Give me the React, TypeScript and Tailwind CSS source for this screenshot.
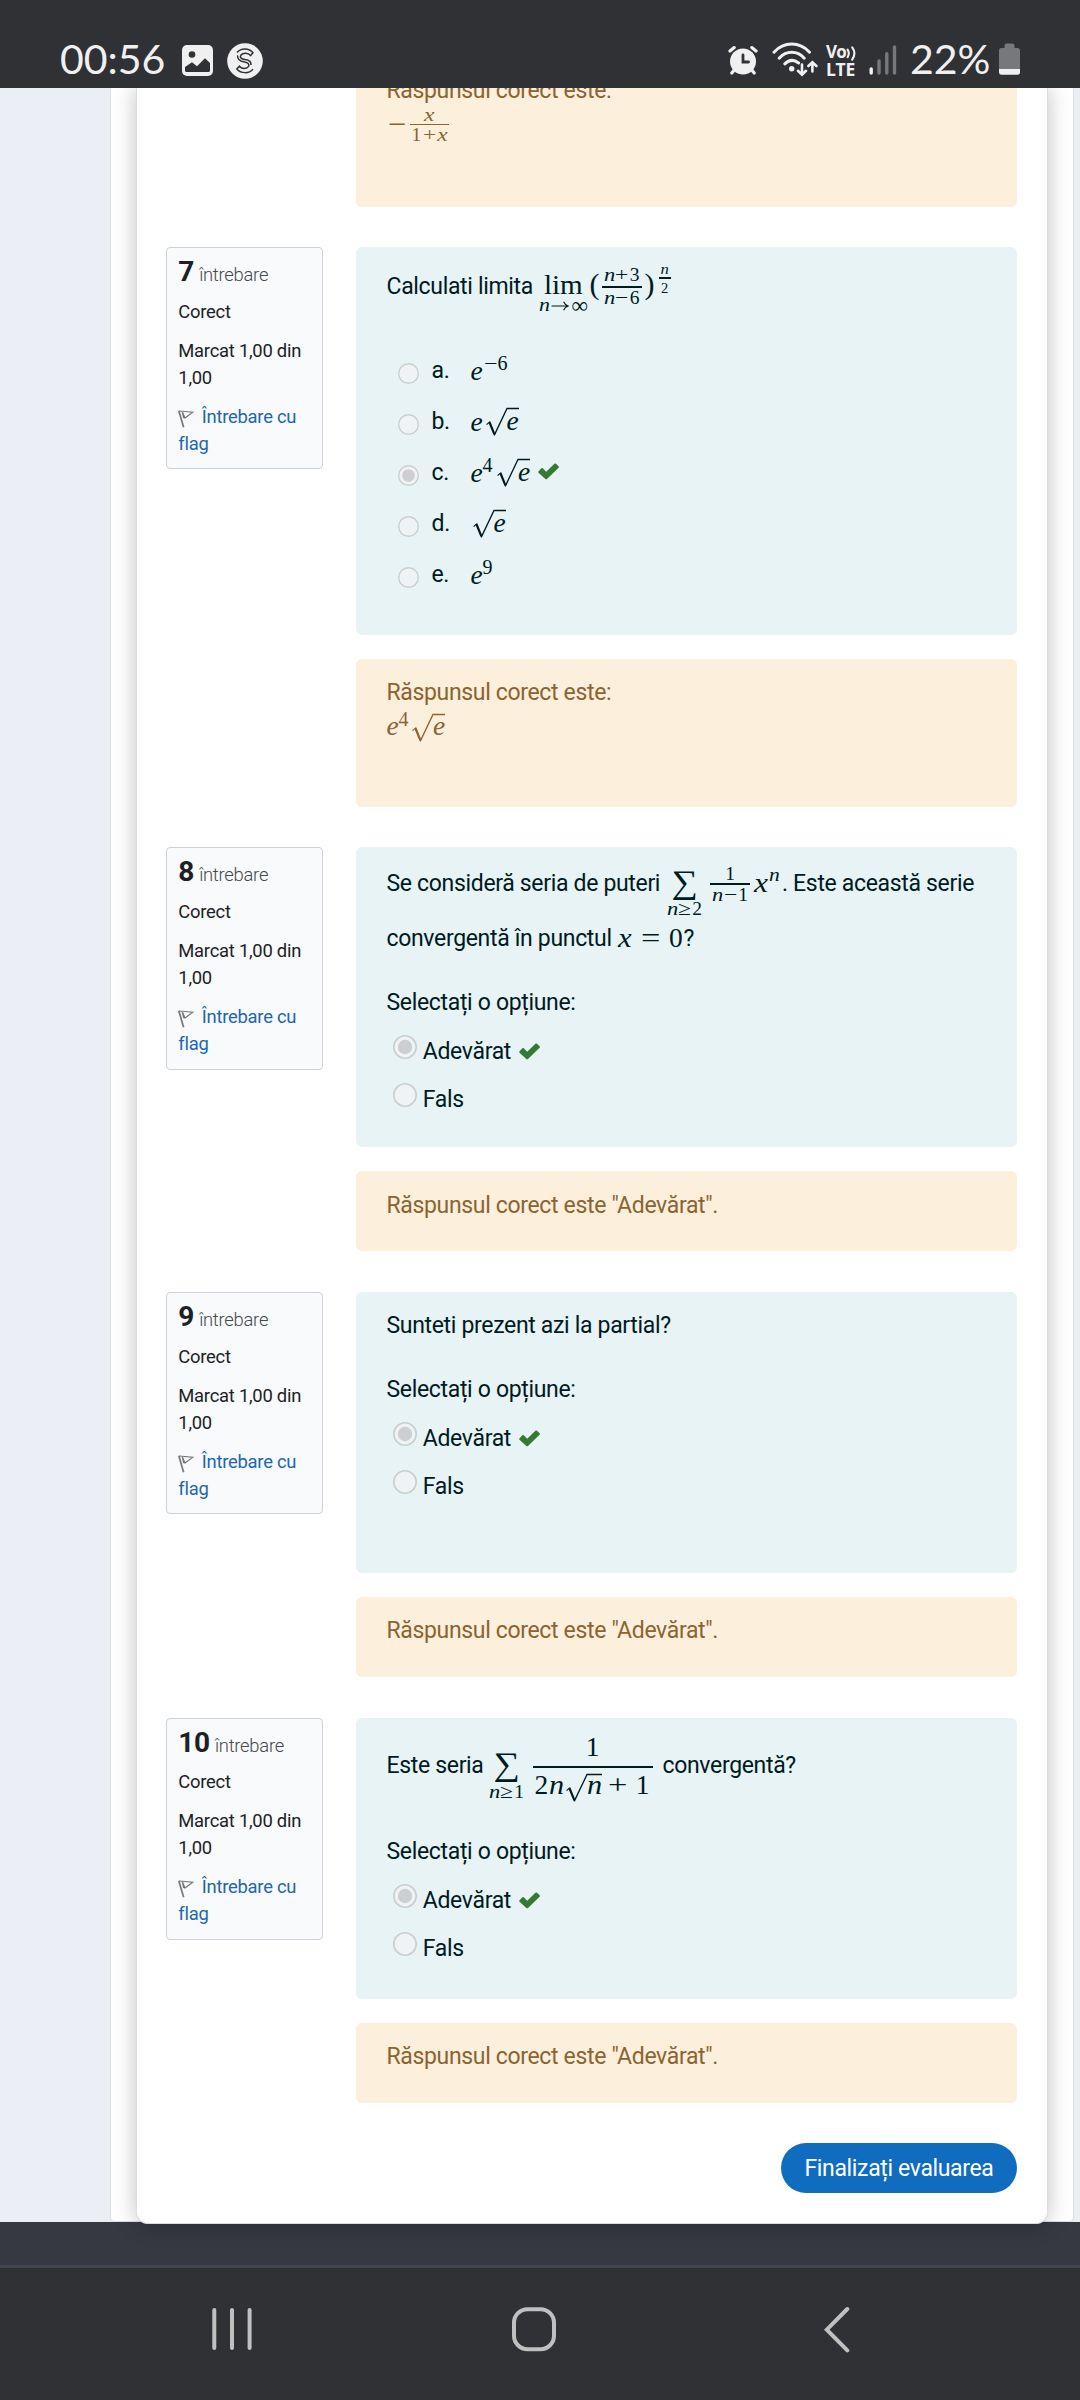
import type { ReactNode } from "react";

/* ---------- formula building blocks ---------- */

const Num = ({ c = "", children }: { c?: string; children: ReactNode }) => (
  <span className={"block shrink-0 whitespace-pre font-['Liberation_Serif',serif] leading-none " + c}>{children}</span>
);

const It = ({ c = "", children }: { c?: string; children: ReactNode }) => (
  <span className={"block shrink-0 whitespace-pre font-['Liberation_Serif',serif] italic leading-none " + c}>{children}</span>
);

const Txt = ({ c = "", children }: { c?: string; children: ReactNode }) => (
  <span className={"block shrink-0 whitespace-pre text-[23px] leading-none tracking-[-0.33px] " + c}>{children}</span>
);

function Root({ c = "", bar = 12, children }: { c?: string; bar?: number; children: ReactNode }) {
  return (
    <span className={"flex shrink-0 items-start " + c}>
      <svg className="block shrink-0" width={21 + bar} height="30" viewBox={`0 0 ${21 + bar} 30`} fill="none" stroke="currentColor">
        <path d="M0.6 17.6L4 14.6" strokeWidth="1.1" />
        <path d="M3.4 15L8.4 27.4" strokeWidth="2.2" />
        <path d={`M8.2 28.4L21 1.5H${21 + bar}`} strokeWidth="1.3" strokeLinejoin="miter" />
      </svg>
      {children}
    </span>
  );
}

const Check = ({ c = "" }: { c?: string }) => (
  <svg className={"block shrink-0 " + c} width="21" height="17" viewBox="0 0 21 17" fill="#357a32">
    <path d="M0.4 8.6L3.3 5.3Q4 4.7 4.8 5.3L8.2 8.8L16.4 0.8Q17.2 0.1 18 0.8L20.6 3.3Q21.2 4 20.6 4.8L9 15.9Q8.2 16.6 7.4 15.9L0.5 9.8Q0 9.2 0.4 8.6Z" />
  </svg>
);

const Radio = ({ c = "", on = false, size = 24 }: { c?: string; on?: boolean; size?: number }) => (
  <svg className={"block shrink-0 " + c} width={size} height={size} viewBox="0 0 24 24">
    <circle cx="12" cy="12" r="11.2" fill="#eff3f5" stroke="#cacece" strokeWidth="1.6" />
    {on && <circle cx="12" cy="12" r="7.2" fill="#cdced0" />}
  </svg>
);

/* ---------- question pieces ---------- */

function Info({ n }: { n: number }) {
  return (
    <aside className="h-[222.5px] w-[157.5px] shrink-0 rounded-[4px] border-[1.5px] border-[#cdd2d9] bg-[#f8fafc] pl-[11.5px] pt-[10px] text-[18.4px] leading-[27px] tracking-[-0.25px] text-[#1d2125]">
      <div className="flex h-[28px] items-baseline whitespace-nowrap leading-[28px]">
        <span className="text-[28px] font-bold">{n}</span>
        <span className="ml-[5px] text-[18.4px] font-light text-[#44484c]">întrebare</span>
      </div>
      <div className="mt-[11.9px]">Corect</div>
      <div className="mt-[12px] whitespace-nowrap">
        Marcat 1,00 din
        <br />
        1,00
      </div>
      <div className="mt-[12px] whitespace-nowrap text-[#1c67b0]">
        <div className="flex">
          <svg className="mr-[7.5px] mt-[7px]" width="16" height="18" viewBox="0 0 16 18" fill="none" stroke="#777" strokeWidth="1.2">
            <path d="M0.8 0.8L5.6 17.2" strokeWidth="1.7" />
            <path d="M1 1L14.8 2.2L7 8L4.3 1.8L5.7 8.2" />
          </svg>
          Întrebare cu
        </div>
        flag
      </div>
    </aside>
  );
}

function Question({ n, box, feedback, children, answer }: { n: number; box: string; feedback: string; children: ReactNode; answer: ReactNode }) {
  return (
    <section className="mb-[40.4px] flex justify-between">
      <Info n={n} />
      <div className="w-[661px]">
        <div className={"overflow-hidden rounded-[6px] bg-[#e7f3f5] pl-[30.5px] text-[#001a1e] " + box}>{children}</div>
        <div className={"mt-[24.2px] overflow-hidden rounded-[6px] bg-[#fcefdc] pl-[30.5px] text-[#8b6430] " + feedback}>{answer}</div>
      </div>
    </section>
  );
}

const Fb = ({ children }: { children: ReactNode }) => <div className="whitespace-nowrap text-[23px] leading-[34.5px] tracking-[-0.34px]">{children}</div>;

function TrueFalse() {
  return (
    <div>
      <Txt>Selectați o opțiune:</Txt>
      <div className="ml-[6px] mt-[21px] flex">
        <Radio on />
        <Txt c="ml-[6.3px] mt-[5px]">Adevărat</Txt>
        <Check c="ml-[7.5px] mt-[8px]" />
      </div>
      <div className="ml-[6px] mt-[20px] flex">
        <Radio />
        <Txt c="ml-[6.3px] mt-[5px]">Fals</Txt>
      </div>
    </div>
  );
}

function Option({ letter, on, children }: { letter: string; on?: boolean; children: ReactNode }) {
  return (
    <div className="flex h-[51.1px] items-start">
      <Radio size={21} on={on} c="mt-[17px]" />
      <Txt c="ml-[12.5px] mt-[13.3px] w-[39px]">{letter}</Txt>
      <div className="flex items-start pt-[1.6px]">{children}</div>
    </div>
  );
}

/* ---------- system bars ---------- */

function StatusBar() {
  return (
    <header className="flex h-[88px] items-start overflow-hidden bg-[#303135] text-[#f0f0f0]">
      <span className="ml-[60px] mt-[38px] block w-[122px] whitespace-nowrap font-['Lato',sans-serif] text-[41px] leading-none">00:56</span>
      <svg className="mt-[45px]" width="31" height="31" viewBox="0 0 31 31">
        <rect width="31" height="31" rx="5" fill="#f0f0f0" />
        <circle cx="10" cy="9.5" r="3.3" fill="#303135" />
        <path d="M3 22L10 17.2L15 21.2L23 13.2L28 18V25.5Q28 27 26.5 27H4.5Q3 27 3 25.5Z" fill="#303135" />
      </svg>
      <svg className="ml-[14px] mt-[43px]" width="36" height="36" viewBox="0 0 36 36" fill="none" stroke="#303135">
        <circle cx="18" cy="18" r="17.8" fill="#f0f0f0" stroke="none" />
        <path d="M10 9.6C14 4.8 22 4.8 26 9.8L23.6 12.6C21.4 9.6 16 9.4 13.8 12.2C12.4 14.8 14.6 16 18 16.6C22 17.2 24.4 19 24 22" strokeWidth="1.5" />
        <path d="M10.6 12.4C10.2 17 13.4 18.4 17.4 19C21 19.6 22.6 21 21.6 23.4C19.8 26.2 15 26.2 12.4 23.2L9.8 26C14 30.8 22 30.8 26 26.2" strokeWidth="1.5" />
      </svg>
      <svg className="ml-[465px] mt-[45px]" width="30" height="31" viewBox="0 0 30 31" fill="none" stroke="#f0f0f0" strokeWidth="3.2" strokeLinecap="round">
        <circle cx="15" cy="16.5" r="13" fill="#f0f0f0" stroke="none" />
        <path d="M2 6L6.2 2.6M28 6L23.8 2.6M5.8 25.5L3.8 28M24.2 25.5L26.2 28" />
        <path d="M15 10V17H20.5" stroke="#303135" strokeWidth="2.8" />
      </svg>
      <svg className="ml-[13.5px] mt-[42px]" width="46" height="35" viewBox="0 0 46 35" fill="none" stroke="#f0f0f0" strokeWidth="3" strokeLinecap="round">
        <path d="M2 10.2C12 -0.6 27.5 -0.6 37.5 10.2M7.2 16.2C14.5 8.4 25 8.4 32.2 16.2M12.8 21.8C17.4 17.4 22 17.4 26.6 21" />
        <circle cx="19.7" cy="26.8" r="2.7" fill="#f0f0f0" stroke="none" />
        <path d="M30 22.5V32M26 28.8L30 32.6L34 28.8M40.4 29.5V20.6M36.4 24L40.4 20.2L44.4 24" strokeWidth="2.6" />
      </svg>
      <div className="ml-[8.5px] mt-[44px] w-[32px] font-['Open_Sans',sans-serif]">
        <div className="flex h-[17px] items-start">
          <span className="block text-[17px] font-bold leading-[16px] tracking-[-0.8px]">Vo</span>
          <svg className="ml-[0.5px] mt-[1.5px]" width="11" height="15" viewBox="0 0 11 15" fill="none" stroke="#f0f0f0" strokeWidth="2.1" strokeLinecap="round">
            <path d="M1.6 3.6Q4 7.2 1.6 11.2M6.2 1.4Q10.6 7.2 6.2 13.6" />
          </svg>
        </div>
        <span className="block text-[17.5px] font-bold leading-[17px] tracking-[-0.3px]">LTE</span>
      </div>
      <svg className="ml-[11px] mt-[45px]" width="28" height="31" viewBox="0 0 28 31" strokeLinecap="round" strokeWidth="3.4">
        <path d="M2.2 24V28" stroke="#f0f0f0" />
        <path d="M10 16V28M17.8 8.6V28M25.5 2V28" stroke="#77787b" />
      </svg>
      <span className="ml-[13px] mt-[38px] block w-[87.5px] whitespace-nowrap font-['Lato',sans-serif] text-[41px] leading-none">22%</span>
      <svg className="ml-[1px] mt-[43px]" width="22" height="32" viewBox="0 0 22 32">
        <path d="M5.5 5V2.5Q5.5 0.5 7.5 0.5H13.5Q15.5 0.5 15.5 2.5V5H18.5Q21 5 21 7.5V26H0V7.5Q0 5 2.5 5Z" fill="#77787b" />
        <path d="M0 26H21V29Q21 31.8 18.5 31.8H2.5Q0 31.8 0 29Z" fill="#f0f0f0" />
      </svg>
    </header>
  );
}

function NavBar() {
  return (
    <nav className="flex h-[132px] items-start bg-[#303134]">
      <svg className="ml-[211px] mt-[38px]" width="42" height="46" viewBox="0 0 42 46" stroke="#c0c0c0" strokeWidth="4" strokeLinecap="round">
        <path d="M3.3 4V42M21 4V42M38.6 4V42" />
      </svg>
      <svg className="ml-[258px] mt-[38px]" width="46" height="48" viewBox="0 0 46 48" fill="none" stroke="#c0c0c0" strokeWidth="4">
        <rect x="3" y="3.2" width="40" height="40" rx="13.5" />
      </svg>
      <svg className="ml-[267px] mt-[38px]" width="28" height="48" viewBox="0 0 28 48" fill="none" stroke="#c0c0c0" strokeWidth="4" strokeLinecap="round">
        <path d="M23.3 3L2.8 23.7L23.3 44.4" />
      </svg>
    </nav>
  );
}

export default function App() {
  return (
    <div className="h-[2400px] w-[1080px] overflow-hidden bg-[#ebeff5] font-['Roboto',sans-serif]">
      <StatusBar />
      <main className="h-[2180px] overflow-hidden">
        <div className="ml-[109.5px] h-[2133.5px] w-[964px] rounded-b-[5px] border-x border-b border-[#dbdfe2] bg-white pl-[25px]">
          <div className="relative z-10 h-[2136px] w-[912px] rounded-b-[12px] border-x border-b border-[#d9dbdc] bg-white pl-[29.3px] pr-[29.5px] shadow-[0_0_22px_rgba(0,0,0,0.25)]">
            <div className="mb-[40.4px] flex justify-end">
              <div className="h-[118.6px] w-[661px] overflow-hidden rounded-b-[6px] bg-[#fcefdc] pl-[30.5px] text-[#8b6430]">
                <div className="-mt-[14px]">
                  <Fb>Răspunsul corect este:</Fb>
                </div>
                <div className="flex items-start">
                  <Num c="ml-[1px] mt-[2.5px] w-[22px] origin-left scale-x-[1.2] text-[27px]">−</Num>
                  <div className="w-[39.5px]">
                    <It c="ml-[14px] -mt-[4px] origin-left scale-x-[1.2] text-[19.5px]">x</It>
                    <div className="mt-[-0.4px] h-[1.7px] bg-current" />
                    <div className="mx-[2px] flex justify-between text-[19.5px]">
                      <Num>1</Num>
                      <Num c="scale-x-[1.2]">+</Num>
                      <It c="scale-x-[1.2]">x</It>
                    </div>
                  </div>
                </div>
              </div>
            </div>

            <Question
              n={7}
              box="h-[388px] pt-[16px]"
              feedback="h-[147.7px] pt-[16.8px]"
              answer={
                <>
                  <Fb>Răspunsul corect este:</Fb>
                  <div className="flex">
                    <It c="mt-[1.7px] w-[12px] text-[27.5px]">e</It>
                    <Num c="mt-[-1.8px] w-[13.5px] text-[20px]">4</Num>
                    <Root c="mt-[2.2px]">
                      <It c="-ml-[12px] mt-[-0.5px] text-[27.5px]">e</It>
                    </Root>
                  </div>
                </>
              }
            >
              <div className="flex h-[85px] items-start">
                <Txt c="mt-[12px] w-[152.5px]">Calculati limita</Txt>
                <div className="flex w-[49px] flex-col items-center">
                  <Num c="mt-[8.4px] scale-x-[1.06] text-[27.5px]">lim</Num>
                  <div className="-mt-[4px] flex w-[49px] items-start justify-between text-[19px]">
                    <It c="origin-left scale-x-[1.15]">n</It>
                    <svg className="mt-[6.5px]" width="18" height="10" viewBox="0 0 18 10" fill="none" stroke="currentColor" strokeWidth="1.1">
                      <path d="M0.5 5H17M12.6 0.8Q13.8 3.8 17.2 5Q13.8 6.2 12.6 9.2" />
                    </svg>
                    <Num c="-mt-[1px] text-[23px]">∞</Num>
                  </div>
                </div>
                <Num c="ml-[1.5px] mt-[6.5px] w-[12px] text-[30px]">(</Num>
                <div className="w-[40px]">
                  <div className="mx-[2px] mt-[2px] flex justify-between text-[19.5px]">
                    <It c="origin-left scale-x-[1.15]">n</It>
                    <Num c="scale-x-[1.2]">+</Num>
                    <Num>3</Num>
                  </div>
                  <div className="mt-[1.8px] h-[1.7px] bg-current" />
                  <div className="mx-[2px] flex justify-between text-[19.5px]">
                    <It c="origin-left scale-x-[1.15]">n</It>
                    <Num c="scale-x-[1.2]">−</Num>
                    <Num>6</Num>
                  </div>
                </div>
                <Num c="ml-[3px] mt-[6.5px] w-[14px] text-[30px]">)</Num>
                <div className="flex w-[12px] flex-col items-center text-[14.5px]">
                  <It c="-mt-[1.2px] scale-x-[1.15]">n</It>
                  <div className="mt-[1px] h-[1.6px] w-full bg-current" />
                  <Num c="mt-[2px]">2</Num>
                </div>
              </div>
              <div className="ml-[11.5px] -mt-[2.3px]">
                <Option letter="a.">
                  <It c="mt-[9.5px] w-[13px] text-[27.5px]">e</It>
                  <Num c="mt-[5.5px] w-[14px] origin-left scale-x-[1.2] text-[20px]">−</Num>
                  <Num c="mt-[5.5px] text-[20px]">6</Num>
                </Option>
                <Option letter="b.">
                  <It c="mt-[9.5px] w-[15px] text-[27.5px]">e</It>
                  <Root c="mt-[8.5px]">
                    <It c="-ml-[12px] mt-[0.5px] text-[27.5px]">e</It>
                  </Root>
                </Option>
                <Option letter="c." on>
                  <It c="mt-[9.5px] w-[12px] text-[27.5px]">e</It>
                  <Num c="mt-[5.5px] w-[14.5px] text-[20px]">4</Num>
                  <Root c="mt-[8.5px]">
                    <It c="-ml-[12px] mt-[0.5px] text-[27.5px]">e</It>
                  </Root>
                  <Check c="ml-[8px] mt-[14px]" />
                </Option>
                <Option letter="d.">
                  <Root c="ml-[2px] mt-[8.2px]">
                    <It c="-ml-[12px] mt-[0.5px] text-[27.5px]">e</It>
                  </Root>
                </Option>
                <Option letter="e.">
                  <It c="mt-[9.8px] w-[12px] text-[27.5px]">e</It>
                  <Num c="mt-[5px] text-[20px]">9</Num>
                </Option>
              </div>
            </Question>

            <Question n={8} box="h-[299.8px] pt-[16.3px]" feedback="h-[80px] pt-[17.3px]" answer={<Fb>Răspunsul corect este "Adevărat".</Fb>}>
              <div className="flex h-[62.3px] items-start">
                <Txt c="mt-[8.7px] w-[279.5px]">Se consideră seria de puteri</Txt>
                <div className="ml-[1px] flex w-[35px] flex-col items-center">
                  <Num c="mt-[2px] scale-x-[1.12] text-[33px]">∑</Num>
                  <div className="mt-[0.5px] flex w-[35px] justify-between text-[19.5px]">
                    <It c="origin-left scale-x-[1.15]">n</It>
                    <Num c="scale-x-[1.2]">≥</Num>
                    <Num>2</Num>
                  </div>
                </div>
                <div className="ml-[8px] w-[40px]">
                  <Num c="text-center text-[19.5px]">1</Num>
                  <div className="mt-[-0.2px] h-[1.7px] bg-current" />
                  <div className="mx-[2px] flex justify-between text-[19.5px]">
                    <It c="origin-left scale-x-[1.15]">n</It>
                    <Num c="scale-x-[1.2]">−</Num>
                    <Num>1</Num>
                  </div>
                </div>
                <It c="ml-[4px] mt-[5.2px] w-[15px] origin-left scale-x-[1.15] text-[27.5px]">x</It>
                <It c="mt-[1.1px] w-[13px] origin-left scale-x-[1.1] text-[19.5px]">n</It>
                <Txt c="mt-[8.7px]">. Este această serie</Txt>
              </div>
              <div className="flex h-[64.9px] items-start">
                <Txt c="mt-[0.9px] w-[231.5px]">convergentă în punctul</Txt>
                <It c="mt-[-2.3px] w-[22.5px] origin-left scale-x-[1.12] text-[27.5px]">x</It>
                <Num c="mt-[-2.3px] w-[28.5px] origin-left scale-x-[1.25] text-[27.5px]">=</Num>
                <Num c="mt-[-2.3px] w-[14.5px] text-[27.5px]">0</Num>
                <Txt c="mt-[0.9px]">?</Txt>
              </div>
              <TrueFalse />
            </Question>

            <Question n={9} box="h-[281.3px] pt-[22.7px]" feedback="h-[80px] pt-[17.3px]" answer={<Fb>Răspunsul corect este "Adevărat".</Fb>}>
              <Txt c="mb-[41px]">Sunteti prezent azi la partial?</Txt>
              <TrueFalse />
            </Question>

            <Question n={10} box="h-[281.3px] pt-[15px]" feedback="h-[80px] pt-[17.3px]" answer={<Fb>Răspunsul corect este "Adevărat".</Fb>}>
              <div className="flex h-[107.2px] items-start">
                <Txt c="mt-[21.8px] w-[102.5px]">Este seria</Txt>
                <div className="flex w-[35px] flex-col items-center">
                  <Num c="mt-[15px] scale-x-[1.12] text-[33px]">∑</Num>
                  <div className="mt-[1px] flex w-[35px] justify-between text-[19.5px]">
                    <It c="origin-left scale-x-[1.15]">n</It>
                    <Num c="scale-x-[1.2]">≥</Num>
                    <Num>1</Num>
                  </div>
                </div>
                <div className="ml-[8.5px] w-[120px]">
                  <Num c="mt-[0.4px] text-center text-[27.5px]">1</Num>
                  <div className="mt-[6px] h-[1.7px] bg-current" />
                  <div className="ml-[2px] flex items-start text-[27.5px]">
                    <Num c="mt-[2.8px] w-[14px]">2</Num>
                    <It c="mt-[2.8px] w-[17.5px] origin-left scale-x-[1.1]">n</It>
                    <Root c="mt-[5px]" bar={15}>
                      <It c="-ml-[15px] mt-[-2.2px] origin-left scale-x-[1.1]">n</It>
                    </Root>
                    <Num c="ml-[7px] mt-[2.8px] w-[28px] origin-left scale-x-[1.25]">+</Num>
                    <Num c="mt-[2.8px]">1</Num>
                  </div>
                </div>
                <Txt c="ml-[10px] mt-[21.8px]">convergentă?</Txt>
              </div>
              <TrueFalse />
            </Question>

            <div className="flex justify-end">
              <button className="h-[50px] w-[236px] whitespace-nowrap rounded-full bg-[#0f6cbf] text-[23px] leading-[49px] tracking-[-0.35px] text-white">Finalizați evaluarea</button>
            </div>
          </div>
        </div>
        <footer className="h-[46.5px] border-b-[3px] border-[#43464f] bg-[#363941]" />
      </main>
      <NavBar />
    </div>
  );
}
